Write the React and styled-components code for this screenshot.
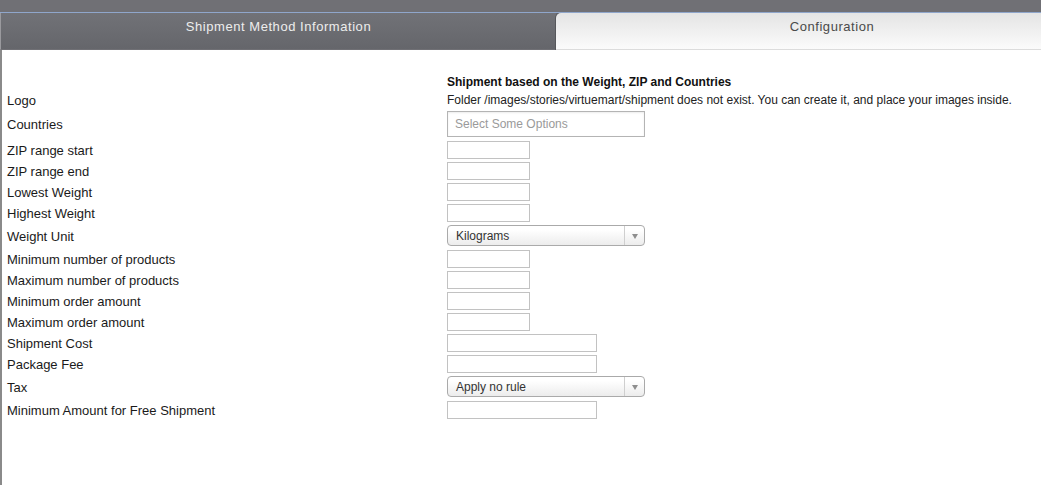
import React from 'react';
import styled, { createGlobalStyle } from 'styled-components';

const GlobalStyle = createGlobalStyle`
  html, body {
    margin: 0;
    padding: 0;
    background: #ffffff;
  }
  body {
    font-family: "Liberation Sans", Arial, sans-serif;
    color: #222;
  }
`;

const Page = styled.div`
  width: 1041px;
  height: 485px;
  overflow: hidden;
  background: #fff;
  display: flex;
  flex-direction: column;
`;

const TopBand = styled.div`
  height: 12px;
  background: #707075;
  border-bottom: 1px solid #8fa6cb;
`;

const TabBar = styled.div`
  display: flex;
  height: 37px;
  background: #66676c;
`;

const Tab = styled.div`
  width: ${props => props.w}px;
  flex: none;
  display: flex;
  align-items: flex-start;
  justify-content: center;
  padding-top: 6px;
  padding-left: ${props => props.shift || 0}px;
  box-sizing: border-box;
  font-size: 13px;
  line-height: 15px;
  letter-spacing: 0.55px;
  ${props => props.active ? `
    background: linear-gradient(#717277, #65666b);
    color: #ededed;
    border-left: 1px solid #9a9a9e;
    border-bottom: 1px solid #707075;
  ` : `
    background: linear-gradient(#e4e4e4, #fbfbfb);
    color: #4a4a4a;
    border-top-left-radius: 5px;
    border-bottom: 1px solid #dcdcdc;
    box-shadow: -1px 0 0 #56575b;
  `}
`;

const Content = styled.div`
  flex: 1;
  border-left: 2px solid #8a8a8a;
  padding: 23px 0 0 5px;
`;

const Row = styled.div`
  display: flex;
  align-items: ${props => props.top ? 'flex-start' : 'center'};
  min-height: ${props => props.h || 18}px;
  margin-bottom: ${props => props.gap ?? 3}px;
`;

const Label = styled.div`
  width: 440px;
  flex-shrink: 0;
  font-size: 13px;
  line-height: ${props => props.lh ? `${props.lh}px` : 'normal'};
  padding-top: ${props => props.nudge || 0}px;
  color: #1a1a1a;
`;

const Field = styled.div`
  font-size: 12px;
  color: #222;
`;

const Heading = styled.div`
  font-size: 12px;
  font-weight: bold;
  line-height: 18px;
  color: #111;
`;

const Note = styled.div`
  font-size: 12px;
  line-height: 18px;
  color: #222;
`;

const TextBox = styled.div`
  width: ${props => props.w || 83}px;
  height: 18px;
  box-sizing: border-box;
  border: 1px solid #c2c2c2;
  background: #fff;
`;

const MultiSelect = styled.div`
  width: 198px;
  height: 26px;
  box-sizing: border-box;
  border: 1px solid #b4b4b4;
  box-shadow: inset 0 1px 2px rgba(0, 0, 0, 0.08);
  display: flex;
  align-items: center;
  padding-left: 7px;
  font-size: 12px;
  color: #9a9a9a;
`;

const Select = styled.div`
  width: 198px;
  height: 21px;
  box-sizing: border-box;
  border: 1px solid #aaaaaa;
  border-radius: 4px;
  background: linear-gradient(#ffffff 20%, #ececec);
  display: flex;
  align-items: center;
  font-size: 12px;
  color: #333;
`;

const SelectText = styled.div`
  flex: 1;
  padding-left: 8px;
`;

const SelectArrow = styled.div`
  width: 19px;
  height: 100%;
  border-left: 1px solid #cfcfcf;
  display: flex;
  align-items: center;
  justify-content: center;
  &::after {
    content: '';
    border-left: 3px solid transparent;
    border-right: 3px solid transparent;
    border-top: 5px solid #8e8e8e;
    margin-top: 2px;
  }
`;

const fields = [
  { label: 'ZIP range start', kind: 'text' },
  { label: 'ZIP range end', kind: 'text' },
  { label: 'Lowest Weight', kind: 'text' },
  { label: 'Highest Weight', kind: 'text' },
  { label: 'Weight Unit', kind: 'select', value: 'Kilograms' },
  { label: 'Minimum number of products', kind: 'text' },
  { label: 'Maximum number of products', kind: 'text' },
  { label: 'Minimum order amount', kind: 'text' },
  { label: 'Maximum order amount', kind: 'text' },
  { label: 'Shipment Cost', kind: 'wide' },
  { label: 'Package Fee', kind: 'wide' },
  { label: 'Tax', kind: 'select', value: 'Apply no rule' },
  { label: 'Minimum Amount for Free Shipment', kind: 'wide' },
];

const renderField = f => {
  if (f.kind === 'select') {
    return (
      <Select>
        <SelectText>{f.value}</SelectText>
        <SelectArrow />
      </Select>
    );
  }
  return <TextBox w={f.kind === 'wide' ? 150 : 83} />;
};

export default function App() {
  return (
    <Page>
      <GlobalStyle />
      <TopBand />
      <TabBar>
        <Tab active w={556}>Shipment Method Information</Tab>
        <Tab w={485} shift={67}>Configuration</Tab>
      </TabBar>
      <Content>
        <Row h={18} gap={0}>
          <Label />
          <Field><Heading>Shipment based on the Weight, ZIP and Countries</Heading></Field>
        </Row>
        <Row h={20} gap={0} top>
          <Label lh={18} nudge={1}>Logo</Label>
          <Field>
            <Note>Folder /images/stories/virtuemart/shipment does not exist. You can create it, and place your images inside.</Note>
          </Field>
        </Row>
        <Row h={26} gap={4}>
          <Label>Countries</Label>
          <Field><MultiSelect>Select Some Options</MultiSelect></Field>
        </Row>
        {fields.map(f => (
          <Row key={f.label} h={f.kind === 'select' ? 21 : 18} gap={f.kind === 'select' ? 4 : 3}>
            <Label nudge={f.kind === 'select' ? 2 : 0}>{f.label}</Label>
            <Field>{renderField(f)}</Field>
          </Row>
        ))}
      </Content>
    </Page>
  );
}
